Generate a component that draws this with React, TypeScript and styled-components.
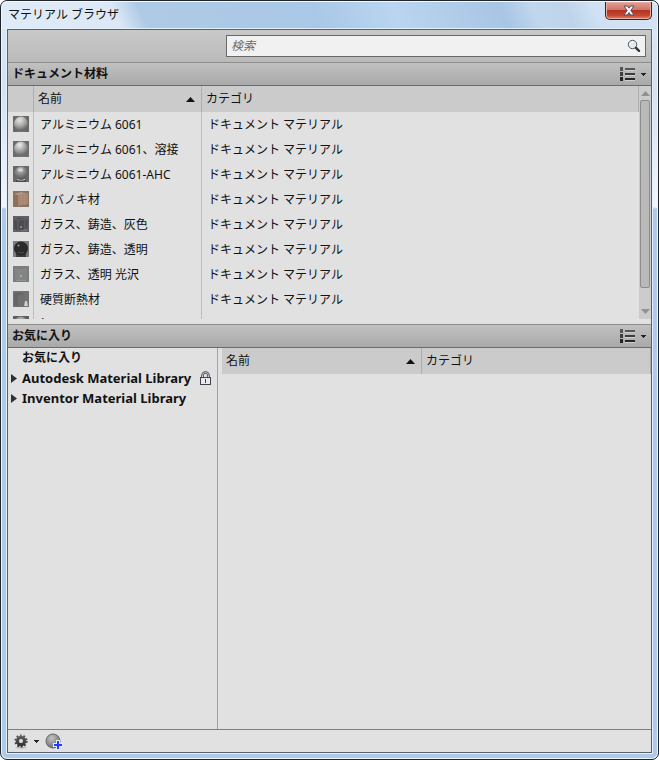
import React from "react";
import styled, { createGlobalStyle } from "styled-components";

const Global = createGlobalStyle`
  *, *::before, *::after { box-sizing: border-box; }
  html, body, #root { height: 100%; margin: 0; }
  body { background: #ffffff; overflow: hidden; }
  body, button, input {
    font-family: "Noto Sans", "Noto Sans CJK JP", sans-serif;
    font-size: 12px;
    line-height: 20px;
    color: #111111;
  }
`;

const Window = styled.main`
  display: flex;
  flex-direction: column;
  height: 100vh;
  padding: 0 6px 6px;
  border: 1px solid #20242c;
  border-radius: 7px;
  box-shadow: inset 0 0 0 1px #eef6fe;
  background:
    linear-gradient(to bottom, #dce7f4 0, #d3e1f2 90px, #f0f6fd 206px, transparent 208px),
    #adcbe8;
`;

const TitleBar = styled.header`
  display: flex;
  justify-content: space-between;
  align-items: flex-start;
  flex: none;
  height: 28px;
  margin: 0 -5px;
  padding: 0 5px 0 6px;
  border-top: 1px solid #f3f9ff;
  border-radius: 6px 6px 0 0;
  background: linear-gradient(65deg, #dfebf7 0%, #dce8f5 18%, #aecae6 22%, #a9c8e7 48%, #b9d5f0 60%, #a8c5e4 76%, #c0d7ee 81%, #bfd4ea 86%, #cfe1f3 90%, #d2e3f4 100%);
`;

const Title = styled.h1`
  margin: 3px 0 0;
  font-size: 12px;
  font-weight: 400;
  line-height: 20px;
`;

const CloseButton = styled.button`
  display: flex;
  justify-content: center;
  align-items: center;
  width: 47px;
  height: 18px;
  padding: 0;
  border: 1px solid #4a1d1d;
  border-top: 0;
  border-radius: 0 0 5px 5px;
  box-shadow: inset 0 0 0 1px #e9aaa0;
  background: linear-gradient(#dfa298 0, #cf7668 45%, #b53320 50%, #c24c33 80%, #df8a66 100%);
`;

const Content = styled.div`
  display: flex;
  flex-direction: column;
  flex: 1;
  min-height: 0;
  border: 1px solid #56616a;
  box-shadow: 0 0 0 1px #e3f0fc;
  background: #e1e1e1;
`;

const SearchBar = styled.form`
  display: flex;
  justify-content: flex-end;
  flex: none;
  height: 32px;
  padding: 5px 5px 0 0;
  background: linear-gradient(#c9c9c9, #bababa);
`;

const SearchBox = styled.label`
  display: flex;
  align-items: center;
  width: 420px;
  height: 22px;
  padding: 0 4px;
  border: 1px solid #686868;
  background: #f1f1f1;
`;

const SearchInput = styled.input`
  flex: 1;
  min-width: 0;
  padding: 0;
  border: 0;
  outline: 0;
  background: transparent;
  &::placeholder { color: #6a6a6a; font-style: italic; opacity: 1; }
`;

const IconButton = styled.button`
  display: flex;
  align-items: center;
  gap: 5px;
  padding: 0;
  border: 0;
  background: transparent;
`;

const SectionBar = styled.div`
  display: flex;
  justify-content: space-between;
  align-items: center;
  flex: none;
  height: 24px;
  padding: 0 5px 0 4px;
  border-top: 1px solid #8d8d8d;
  border-bottom: 1px solid #6b6b6b;
  background: linear-gradient(#c1c1c1, #a9a9a9);
`;

const SectionTitle = styled.h2`
  margin: 0;
  font-size: 12px;
  font-weight: 700;
  line-height: 20px;
`;

const DocumentPane = styled.section`
  display: flex;
  flex: none;
  height: 238px;
  padding-bottom: 5px;
`;

const TableClip = styled.div`
  flex: 1;
  overflow: hidden;
`;

const Table = styled.table`
  width: 100%;
  table-layout: fixed;
  border-collapse: separate;
  border-spacing: 0;
`;

const Column = styled.col<{ $width?: number }>`
  width: ${(p) => (p.$width ? `${p.$width}px` : "auto")};
`;

const HeadCell = styled.th`
  height: 26px;
  padding: 0 4px;
  border-right: 1px solid #adadad;
  background: #cbcbcb;
  font-weight: 400;
  text-align: left;
`;

const HeadLabel = styled.div`
  display: flex;
  justify-content: space-between;
  align-items: center;
  padding-right: 2px;
`;

const Cell = styled.td`
  height: 25px;
  padding: 3px 6px 2px;
  border-right: 1px solid #bdbdbd;
  white-space: nowrap;
  vertical-align: top;
  &:first-child { padding: 4px 5px; }
  &:last-child { border-right: 0; }
  svg { display: block; }
`;

const ScrollBar = styled.div`
  display: flex;
  flex-direction: column;
  align-items: center;
  width: 12px;
  padding: 5px 0;
  background: #cccccc;
`;

const ScrollThumb = styled.div`
  width: 10px;
  height: 188px;
  margin: 4px 0 auto;
  border: 1px solid #8d8d8d;
  border-radius: 2px;
  background: #b9b9b9;
`;

const LibraryPane = styled.section`
  display: flex;
  flex: 1;
  min-height: 0;
`;

const Tree = styled.ul`
  width: 210px;
  flex: none;
  margin: 0 4px 0 0;
  padding: 0;
  border-right: 1px solid #a3a3a3;
  list-style: none;
`;

const TreeItem = styled.li`
  display: flex;
  align-items: center;
  height: 20px;
  padding: 0 5px 0 3px;
  font-weight: 700;
`;

const TreeMarker = styled.span`
  display: flex;
  width: 11px;
`;

const TreeLabel = styled.span<{ $latin?: boolean }>`
  flex: 1;
  white-space: nowrap;
  font-size: ${(p) => (p.$latin ? 13 : 12)}px;
`;

const Results = styled.div`
  flex: 1;
`;

const Footer = styled.footer`
  display: flex;
  align-items: center;
  gap: 6px;
  flex: none;
  height: 23px;
  padding: 0 5px;
  border-top: 1px solid #7b807c;
`;

const SortArrow = () => (
  <svg width="9" height="5" viewBox="0 0 9 5" aria-hidden="true"><path d="M4.5 0 9 5H0z" fill="#111" /></svg>
);

const DropArrow = () => (
  <svg width="5" height="3" viewBox="0 0 5 3" aria-hidden="true"><path d="M0 0h5v1H4v1H3v1H2V2H1V1H0z" fill="#222" /></svg>
);

const ExpandArrow = () => (
  <svg width="6" height="9" viewBox="0 0 6 9" aria-hidden="true"><path d="M0 0 6 4.5 0 9z" fill="#303030" /></svg>
);

const ScrollArrow = ({ down }: { down?: boolean }) => (
  <svg width="9" height="5" viewBox="0 0 9 5" aria-hidden="true">
    <path d={down ? "M0 0H9L4.5 5z" : "M4.5 0 9 5H0z"} fill="#919191" />
  </svg>
);

const ListIcon = () => (
  <svg width="17" height="15" viewBox="0 0 17 15" aria-hidden="true">
    <path d="M1 0h3v4H1zM6 1h10v2H6z" fill="#555" />
    <path d="M1 5h3v4H1zM6 6h10v2H6z" fill="#3d3d3d" />
    <path d="M1 10h3v4H1zM6 11h10v2H6z" fill="#262626" />
    <path d="M6 3h10v1H6zM6 8h10v1H6zM6 13h10v1H6z" fill="#cfcfcf" />
  </svg>
);

const SearchIcon = () => (
  <svg width="14" height="14" viewBox="0 0 14 14" aria-hidden="true">
    <circle cx="5.5" cy="5.5" r="4.2" fill="#e5e9ed" stroke="#555b62" />
    <path d="M3.5 5.5A2 2 0 0 1 6 3.2" fill="none" stroke="#fff" strokeWidth="1.3" />
    <path d="M9 8.8 12 11.8" stroke="#2d3940" strokeWidth="2.4" strokeLinecap="round" />
  </svg>
);

const CloseIcon = () => (
  <svg width="12" height="11" viewBox="0 0 12 11" aria-hidden="true">
    <path d="M1 1h3.4L6 3.2 7.6 1H11L7.9 5.4 11 10H7.6L6 7.6 4.4 10H1l3.1-4.6z" fill="#fafafa" stroke="#5a4a5c" />
  </svg>
);

const LockIcon = () => (
  <svg width="13" height="15" viewBox="0 0 13 15" aria-hidden="true">
    <path d="M3.5 7V4.5a3 3 0 0 1 6 0V7" fill="none" stroke="#444852" strokeWidth="2.6" />
    <path d="M3.5 7V4.5a3 3 0 0 1 6 0V7" fill="none" stroke="#dfe1e4" strokeWidth="0.9" />
    <rect x="1.5" y="6.5" width="10" height="7" fill="#e9eaed" stroke="#3f4350" />
    <path d="M6 8h1v4H6z" fill="#3f4350" />
  </svg>
);

const GearIcon = () => (
  <svg width="16" height="16" viewBox="0 0 16 16" aria-hidden="true">
    <defs>
      <linearGradient id="gear" x1="0" y1="0" x2="0" y2="16" gradientUnits="userSpaceOnUse">
        <stop offset="0" stopColor="#6e6e6e" /><stop offset="1" stopColor="#222" />
      </linearGradient>
    </defs>
    <ellipse cx="8" cy="14.6" rx="6" ry="1" fill="#bcbcbc" />
    <circle cx="8" cy="8" r="5.6" fill="none" stroke="url(#gear)" strokeWidth="2" strokeDasharray="1.76 1.76" />
    <circle cx="8" cy="8" r="3.5" fill="none" stroke="url(#gear)" strokeWidth="3.4" />
    <circle cx="8" cy="8" r="1.9" fill="#dcdcdc" />
  </svg>
);

const AddMaterialIcon = () => (
  <svg width="18" height="17" viewBox="0 0 18 17" aria-hidden="true">
    <defs>
      <radialGradient id="add-ball" cx="0.4" cy="0.3" r="0.7">
        <stop offset="0" stopColor="#c3c3c3" /><stop offset="1" stopColor="#707070" />
      </radialGradient>
    </defs>
    <circle cx="8" cy="8" r="7" fill="url(#add-ball)" stroke="#666" />
    <path d="M11 7h4v3h3v4h-3v3h-4v-3H8v-4h3z" fill="#e8e8ee" />
    <path d="M12 8h2v3h3v2h-3v3h-2v-3H9v-2h3z" fill="#1c3fff" />
  </svg>
);

type ThumbKind = "satin" | "welded" | "chrome" | "wood" | "greyGlass" | "clearGlass" | "gloss" | "foam" | "steel";

const thumbs: Record<ThumbKind, React.ReactNode> = {
  satin: <><path d="M0 0h16v16H0z" fill="#696969" /><circle cx="8" cy="7.6" r="7" fill="url(#satin)" /><path d="M4 14.5q4 1 8 0V16H4z" fill="#777" /></>,
  welded: <><path d="M0 0h16v16H0z" fill="#6c6c6c" /><circle cx="8" cy="7.6" r="7" fill="url(#welded)" /><path d="M4 14.5q4 1 8 0V16H4z" fill="#777" /></>,
  chrome: <><path d="M0 0h16v16H0z" fill="#686868" /><circle cx="8" cy="7" r="6.5" fill="url(#chrome)" /><ellipse cx="7.5" cy="4" rx="2.6" ry="1.8" fill="#d6d6d6" /><path d="M3 14h10v2H3z" fill="#484848" /><path d="M4 13q4 2 8 0v1q-4 1-8 0z" fill="#d8d8d8" /></>,
  wood: <><path d="M0 0h16v16H0z" fill="#857468" /><path d="M1 3 5 4v11l-4-2z" fill="#90705c" /><path d="M5 4 15 3v10L5 15z" fill="#aa8770" /><path d="M1 3 8 1l7 2L5 4z" fill="#b8977f" /><path d="M8.5 4v10M11.5 4v10" stroke="#b08d76" /></>,
  greyGlass: <><path d="M0 0h16v16H0z" fill="#606164" /><path d="M1 3 6 2l9 1-1 10-9 2-4-2z" fill="#4b4c50" /><path d="M5 4v11M1 3l4 1 10-1M12 4v9" fill="none" stroke="#66676b" /><path d="M7 10h2v2H7z" fill="#85868a" /><path d="M1 14 5 15l9-2v2H1z" fill="#77787b" /></>,
  clearGlass: <><path d="M0 0h16v16H0z" fill="#7b7b7b" /><path d="M3 13h10v3H3z" fill="#3c3c3c" /><circle cx="8" cy="7.5" r="7" fill="#2b2b2b" /><circle cx="5.5" cy="4.5" r="1" fill="#a0a0a0" /><path d="M5 11q3 2 6 0" fill="none" stroke="#4e4e4e" /></>,
  gloss: <><path d="M0 0h16v16H0z" fill="#7c7e7d" /><path d="M2 3h12v11H2z" fill="#828483" /><path d="M2 3 6 5l8-2M6 5v9" fill="none" stroke="#8b8d8c" /><path d="M7 9h2v2H7z" fill="#a9abaa" /><path d="M3 14h10v1H3z" fill="#929493" /></>,
  foam: <><path d="M0 0h16v16H0z" fill="#737373" /><path d="M1 2 6 1l6 2v12l-6 1-5-2z" fill="#666" /><path d="M5 4 12 3v12l-7 1z" fill="#707070" /><path d="M12 10h2l1 5h-4z" fill="#cecece" /></>,
  steel: <><path d="M0 0h16v16H0z" fill="#5e5e5e" /><circle cx="8" cy="7.6" r="7" fill="url(#chrome)" /></>,
};

const Thumb = ({ kind }: { kind: ThumbKind }) => (
  <svg width="16" height="16" viewBox="0 0 16 16" aria-hidden="true">
    <defs>
      <radialGradient id="satin" cx="0.4" cy="0.25" r="0.75">
        <stop offset="0" stopColor="#e4e4e1" /><stop offset="0.5" stopColor="#b0b0ad" /><stop offset="1" stopColor="#666" />
      </radialGradient>
      <radialGradient id="welded" cx="0.4" cy="0.25" r="0.75">
        <stop offset="0" stopColor="#ededf0" /><stop offset="0.5" stopColor="#aaaaad" /><stop offset="1" stopColor="#666" />
      </radialGradient>
      <radialGradient id="chrome" cx="0.45" cy="0.25" r="0.75">
        <stop offset="0" stopColor="#bcbcbc" /><stop offset="0.6" stopColor="#7b7b78" /><stop offset="1" stopColor="#555" />
      </radialGradient>
    </defs>
    {thumbs[kind]}
  </svg>
);

const materials: { kind: ThumbKind; name: string }[] = [
  { kind: "satin", name: "アルミニウム 6061" },
  { kind: "welded", name: "アルミニウム 6061、溶接" },
  { kind: "chrome", name: "アルミニウム 6061-AHC" },
  { kind: "wood", name: "カバノキ材" },
  { kind: "greyGlass", name: "ガラス、鋳造、灰色" },
  { kind: "clearGlass", name: "ガラス、鋳造、透明" },
  { kind: "gloss", name: "ガラス、透明 光沢" },
  { kind: "foam", name: "硬質断熱材" },
  { kind: "steel", name: "鋼" },
];

const Section = ({ title }: { title: string }) => (
  <SectionBar>
    <SectionTitle>{title}</SectionTitle>
    <IconButton type="button" aria-label={`${title} 表示オプション`}><ListIcon /><DropArrow /></IconButton>
  </SectionBar>
);

const SortedHead = () => (
  <HeadCell scope="col"><HeadLabel>名前<SortArrow /></HeadLabel></HeadCell>
);

export default function App() {
  return (
    <>
      <Global />
      <Window>
        <TitleBar>
          <Title>マテリアル ブラウザ</Title>
          <CloseButton type="button" aria-label="閉じる"><CloseIcon /></CloseButton>
        </TitleBar>
        <Content>
          <SearchBar onSubmit={(e) => e.preventDefault()}>
            <SearchBox>
              <SearchInput type="text" placeholder="検索" aria-label="検索" />
              <IconButton type="submit" aria-label="検索を実行"><SearchIcon /></IconButton>
            </SearchBox>
          </SearchBar>
          <Section title="ドキュメント材料" />
          <DocumentPane>
            <TableClip>
              <Table>
                <colgroup><Column $width={26} /><Column $width={168} /><Column /></colgroup>
                <thead><tr><HeadCell aria-label="サムネイル" /><SortedHead /><HeadCell scope="col">カテゴリ</HeadCell></tr></thead>
                <tbody>
                  {materials.map((m) => (
                    <tr key={m.name}>
                      <Cell><Thumb kind={m.kind} /></Cell>
                      <Cell>{m.name}</Cell>
                      <Cell>ドキュメント マテリアル</Cell>
                    </tr>
                  ))}
                </tbody>
              </Table>
            </TableClip>
            <ScrollBar><ScrollArrow /><ScrollThumb /><ScrollArrow down /></ScrollBar>
          </DocumentPane>
          <Section title="お気に入り" />
          <LibraryPane>
            <Tree>
              <TreeItem><TreeMarker /><TreeLabel>お気に入り</TreeLabel></TreeItem>
              <TreeItem><TreeMarker><ExpandArrow /></TreeMarker><TreeLabel $latin>Autodesk Material Library</TreeLabel><LockIcon /></TreeItem>
              <TreeItem><TreeMarker><ExpandArrow /></TreeMarker><TreeLabel $latin>Inventor Material Library</TreeLabel></TreeItem>
            </Tree>
            <Results>
              <Table>
                <colgroup><Column $width={200} /><Column /></colgroup>
                <thead><tr><SortedHead /><HeadCell scope="col">カテゴリ</HeadCell></tr></thead>
              </Table>
            </Results>
          </LibraryPane>
          <Footer>
            <IconButton type="button" aria-label="管理"><GearIcon /><DropArrow /></IconButton>
            <IconButton type="button" aria-label="マテリアルを作成"><AddMaterialIcon /></IconButton>
          </Footer>
        </Content>
      </Window>
    </>
  );
}
